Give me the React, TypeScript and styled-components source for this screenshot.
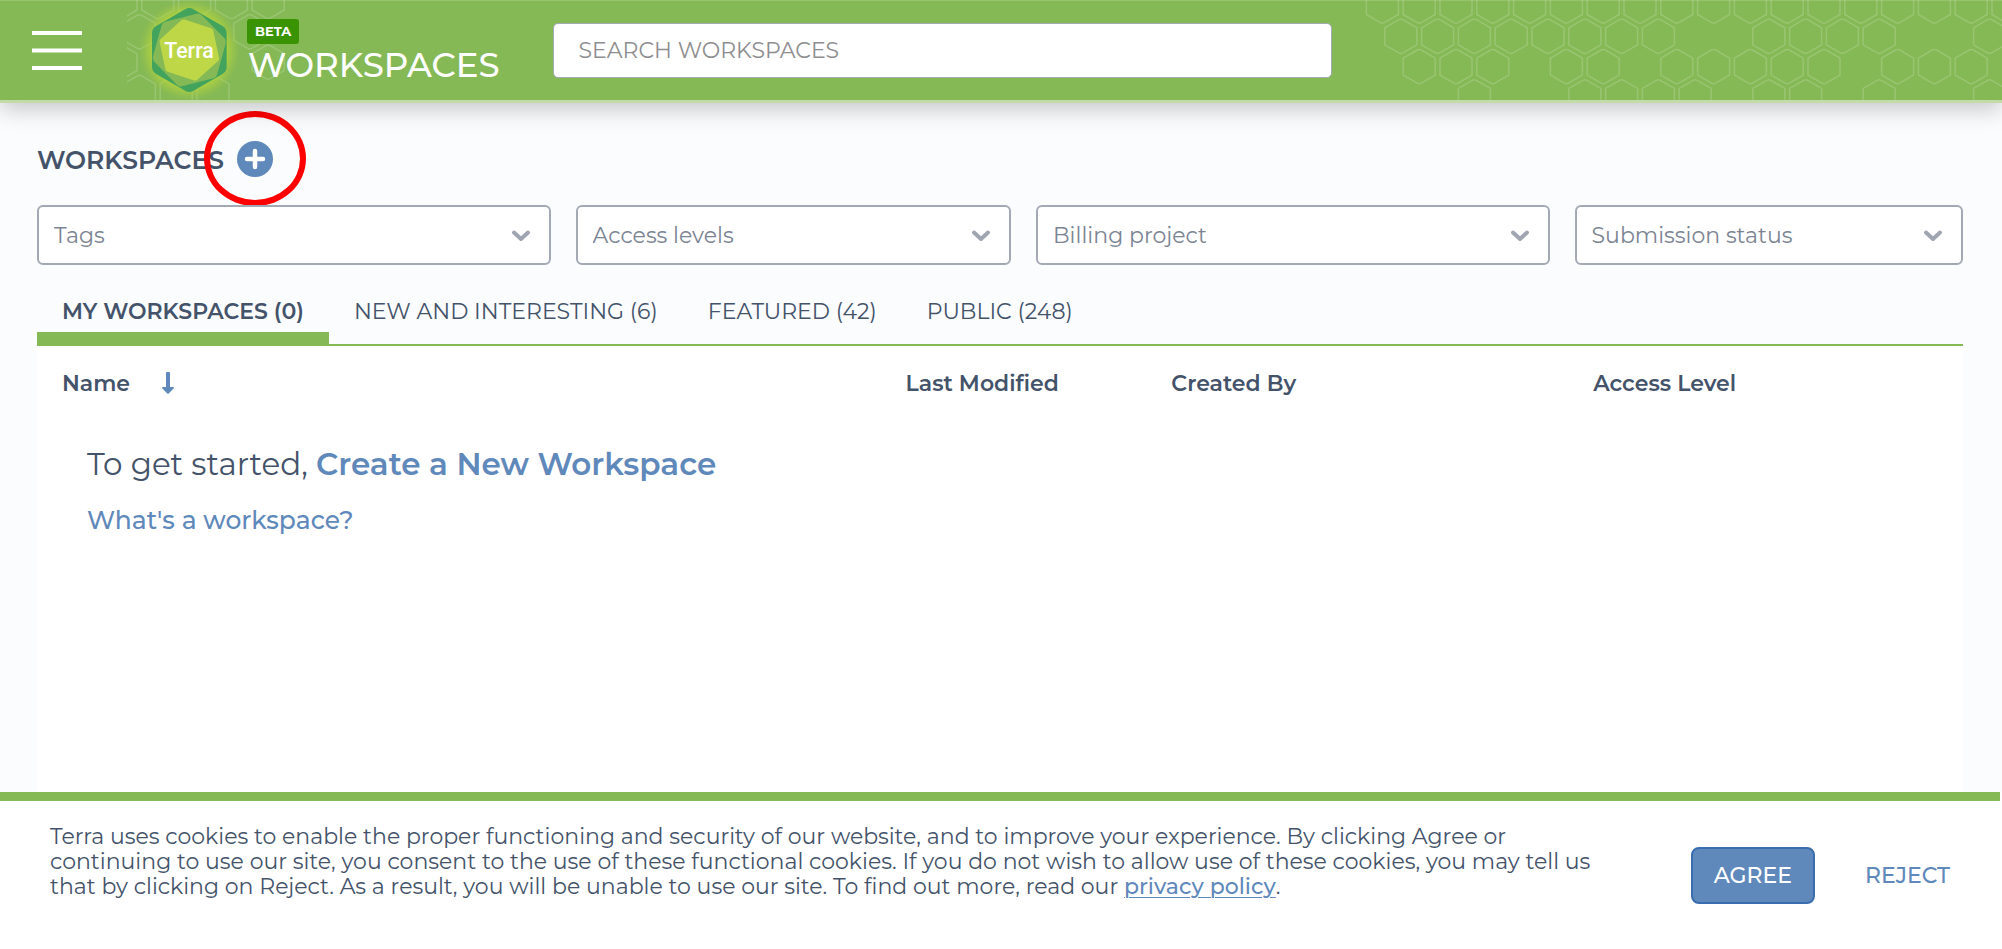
import React from 'react';
import styled, { createGlobalStyle } from 'styled-components';

const green = '#85b955';
const blue = '#5f88bb';
const ink = '#44536a';
const muted = '#7b8493';
const outline = '#a3a9b5';

const GlobalStyle = createGlobalStyle`
  *, *::before, *::after { box-sizing: border-box; }
  body { margin: 0; background: #fff; }
  body, button, input, select {
    font-family: Montserrat, Inter, 'Liberation Sans', sans-serif;
    font-size: 22px;
    line-height: 27px;
    color: ${ink};
  }
`;

const Page = styled.div`
  min-height: 100vh;
  display: flex;
  flex-direction: column;
`;

const Header = styled.header`
  position: relative;
  z-index: 1;
  display: flex;
  align-items: center;
  height: 103px;
  padding: 0 32px;
  background: ${green};
  border-bottom: 3px solid #c2dba9;
  box-shadow: 0 6px 22px rgba(0, 0, 0, 0.22), inset 0 1px 0 #98c470;
`;

const Honeycomb = styled.svg<{ $side: 'left' | 'right' }>`
  position: absolute;
  top: 0;
  ${(p) => (p.$side === 'left' ? 'left: 127px;' : 'right: 0;')}
  fill: none;
  stroke: #fff;
  stroke-opacity: 0.17;
  stroke-width: 1.5;
  pointer-events: none;
`;

const MenuButton = styled.button`
  display: flex;
  flex: none;
  padding: 0;
  border: 0;
  background: none;
  cursor: pointer;
`;

const LogoLink = styled.a`
  position: relative;
  display: flex;
  flex: none;
  margin-left: 38px;
`;

const Brand = styled.div`
  position: relative;
  display: flex;
  flex-direction: column;
  align-items: flex-start;
  gap: 3px;
  margin: 2px 0 0 7px;
`;

const Beta = styled.span`
  padding: 0 8px;
  border-radius: 3px;
  background: #3a9402;
  color: #fff;
  font-size: 13px;
  font-weight: 700;
  line-height: 25px;
`;

const Title = styled.div`
  padding-left: 1px;
  color: #fff;
  font-size: 34px;
  font-weight: 500;
  line-height: 36px;
`;

const Search = styled.input`
  position: relative;
  flex: 0 1 779px;
  min-width: 0;
  height: 55px;
  margin-left: 53px;
  padding: 0 25px;
  border: 1px solid ${outline};
  border-radius: 5px;
  background: #fff;
  &::placeholder { color: #8e8e90; opacity: 1; }
`;

const Main = styled.main`
  flex: 1;
  display: flex;
  flex-direction: column;
  padding: 38px 39px 0 37px;
  background: #fafcfe;
`;

const HeadingRow = styled.div`
  display: flex;
  align-items: center;
  gap: 13px;
`;

const Heading = styled.h1`
  margin: 0;
  padding-top: 2px;
  font-size: 25px;
  font-weight: 600;
  line-height: 30px;
`;

const AddWrap = styled.div`
  position: relative;
  display: flex;
`;

const AddButton = styled.button`
  display: flex;
  align-items: center;
  justify-content: center;
  width: 36px;
  height: 36px;
  padding: 0;
  border: 0;
  border-radius: 50%;
  background: ${blue};
  cursor: pointer;
`;

const Highlight = styled.span`
  position: absolute;
  top: -30px;
  left: -33px;
  width: 102px;
  height: 95px;
  border: 6px solid #fe0000;
  border-radius: 50%;
  pointer-events: none;
`;

const Filters = styled.div`
  display: grid;
  grid-template-columns: 513fr 435fr 513fr 388fr;
  gap: 25px;
  margin-top: 28px;
`;

const Field = styled.div`
  position: relative;
`;

const Select = styled.select`
  display: block;
  width: 100%;
  height: 60px;
  padding: 0 60px 0 15px;
  appearance: none;
  border: 2px solid ${outline};
  border-radius: 6px;
  background: #fff;
  color: ${muted};
`;

const Chevron = styled.svg`
  position: absolute;
  top: 25px;
  right: 20px;
  fill: none;
  stroke: #a0a6b1;
  stroke-width: 4;
  stroke-linecap: round;
  stroke-linejoin: round;
  pointer-events: none;
`;

const Tabs = styled.nav`
  display: flex;
  margin-top: 24px;
  box-shadow: inset 0 -2px 0 ${green};
`;

const Tab = styled.button<{ $active?: boolean }>`
  height: 57px;
  padding: 2px 25px 0;
  border: 0;
  border-bottom: 14px solid ${(p) => (p.$active ? green : 'transparent')};
  background: none;
  font-weight: ${(p) => (p.$active ? 600 : 400)};
  cursor: pointer;
`;

const Panel = styled.section`
  flex: 1;
  background: #fff;
`;

const Table = styled.table`
  width: 100%;
  table-layout: fixed;
  border-collapse: collapse;
`;

const Column = styled.col<{ $share: number }>`
  width: ${(p) => p.$share}%;
`;

const HeadCell = styled.th`
  height: 74px;
  padding: 0 0 0 25px;
  text-align: left;
  font-weight: 600;
`;

const SortButton = styled.button`
  display: flex;
  align-items: center;
  gap: 32px;
  padding: 0;
  border: 0;
  background: none;
  font-weight: 600;
  cursor: pointer;
`;

const EmptyCell = styled.td`
  padding: 25px 50px;
`;

const Intro = styled.p`
  margin: 0 0 22px;
  font-size: 31px;
  line-height: 38px;
`;

const TextLink = styled.a<{ $weight: number; $underline?: boolean }>`
  color: ${blue};
  font-weight: ${(p) => p.$weight};
  text-decoration: ${(p) => (p.$underline ? 'underline' : 'none')};
  text-decoration-thickness: 1px;
  text-underline-offset: 3px;
`;

const Help = styled.p`
  margin: 0;
  font-size: 25px;
  line-height: 30px;
`;

const CookieBar = styled.footer`
  display: flex;
  align-items: center;
  margin-right: 2px;
  padding: 0 50px;
  border-top: 9px solid ${green};
  background: #fff;
`;

const CookieText = styled.p`
  flex: 1;
  margin: 0 90px 0 0;
  padding: 23px 0 50px;
  line-height: 25px;
`;

const Agree = styled.button`
  height: 57px;
  padding: 0 21px;
  border: 2px solid #3a6daf;
  border-radius: 8px;
  background: ${blue};
  color: #fff;
  font-weight: 500;
  cursor: pointer;
`;

const Reject = styled.button`
  margin-left: 50px;
  padding: 0;
  border: 0;
  background: none;
  color: ${blue};
  font-weight: 500;
  cursor: pointer;
`;

/* Outline of one honeycomb cell with slightly softened tips. */
const cell = (cx: number, cy: number) =>
  `M${cx - 16} ${cy - 8.5}L${cx - 2} ${cy - 16.6}Q${cx} ${cy - 17.6} ${cx + 2} ${cy - 16.6}L${cx + 16} ${cy - 8.5}V${cy + 8.5}L${cx + 2} ${cy + 16.6}Q${cx} ${cy + 17.6} ${cx - 2} ${cy + 16.6}L${cx - 16} ${cy + 8.5}Z`;

const comb = (rows: number[][], x: number, y: number) =>
  rows
    .map((cols, r) => cols.map((c) => cell(x + c * 36.8 + (r % 2) * 18.4, y + r * 30.3)).join(''))
    .join('');

const rightRows = [
  [0, 1, 2, 3, 4, 5, 6, 7, 8, 9, 10, 11, 12, 13, 14, 15, 16, 17],
  [0, 1, 2, 3, 4, 5, 6, 7, 10, 11, 12, 13, 16],
  [1, 2, 3, 5, 6, 8, 9, 10, 11, 12, 14, 15, 16],
  [2, 5, 6, 7, 8, 10, 11, 13, 16],
];
const leftRows = [[0, 1, 2, 3, 4], [0, 3], [0, 4], [0, 1, 2]];

const hexPoints = (r: number, turn: number) =>
  [0, 60, 120, 180, 240, 300]
    .map((a) => {
      const t = ((a + turn) * Math.PI) / 180;
      return `${(208 + r * Math.sin(t)).toFixed(1)},${(150 - r * Math.cos(t)).toFixed(1)}`;
    })
    .join(' ');

const Hex = ({ r, turn, round, color }: { r: number; turn: number; round: number; color: string }) => (
  <polygon points={hexPoints(r, turn)} fill={color} stroke={color} strokeWidth={round} strokeLinejoin="round" />
);

const TerraLogo = () => (
  <svg width="120" height="100" viewBox="0 0 360 300" role="img" aria-label="Terra">
    <defs>
      <radialGradient id="glow" gradientUnits="userSpaceOnUse" cx="208" cy="150" r="152">
        <stop offset="0.7" stopColor="#b8d63c" stopOpacity="0.9" />
        <stop offset="0.84" stopColor="#b0d140" stopOpacity="0.5" />
        <stop offset="1" stopColor="#a0c84a" stopOpacity="0" />
      </radialGradient>
    </defs>
    <circle cx="208" cy="150" r="152" fill="url(#glow)" />
    <Hex r={100.5} turn={0} round={50} color="#42a35c" />
    <Hex r={98} turn={15.5} round={30} color="#84b956" />
    <Hex r={83.5} turn={-12} round={20} color="#bdd747" />
    <text x="207" y="173" textAnchor="middle" fill="#fff" fontFamily="Roboto, sans-serif" fontWeight="500" fontSize="64">
      Terra
    </text>
  </svg>
);

const filters = ['Tags', 'Access levels', 'Billing project', 'Submission status'];
const tabs = ['MY WORKSPACES (0)', 'NEW AND INTERESTING (6)', 'FEATURED (42)', 'PUBLIC (248)'];

export default function App() {
  return (
    <Page>
      <GlobalStyle />
      <Header>
        <Honeycomb $side="left" width="170" height="100" viewBox="127 0 170 100" aria-hidden="true">
          <path d={comb(leftRows, 121, 1.5)} />
        </Honeycomb>
        <Honeycomb $side="right" width="662" height="100" viewBox="0 0 662 100" aria-hidden="true">
          <path d={comb(rightRows, 42.4, 6)} />
        </Honeycomb>
        <MenuButton aria-label="Menu">
          <svg width="50" height="40" viewBox="0 0 50 40" stroke="#fff" strokeWidth="4" strokeLinecap="butt">
            <path d="M0 3H50M0 20.5H50M0 38H50" />
          </svg>
        </MenuButton>
        <LogoLink href="#">
          <TerraLogo />
        </LogoLink>
        <Brand>
          <Beta>BETA</Beta>
          <Title>WORKSPACES</Title>
        </Brand>
        <Search type="search" placeholder="SEARCH WORKSPACES" aria-label="Search workspaces" />
      </Header>

      <Main>
        <HeadingRow>
          <Heading>WORKSPACES</Heading>
          <AddWrap>
            <AddButton aria-label="Create a new workspace">
              <svg width="22" height="22" viewBox="0 0 22 22" stroke="#fff" strokeWidth="4.5" strokeLinecap="round">
                <path d="M3 11H19M11 3V19" />
              </svg>
            </AddButton>
            <Highlight />
          </AddWrap>
        </HeadingRow>

        <Filters>
          {filters.map((name) => (
            <Field key={name}>
              <Select aria-label={name}>
                <option>{name}</option>
              </Select>
              <Chevron width="20" height="12" viewBox="0 0 20 12" aria-hidden="true">
                <path d="M3 2.5L10 9L17 2.5" />
              </Chevron>
            </Field>
          ))}
        </Filters>

        <Tabs>
          {tabs.map((name, i) => (
            <Tab key={name} $active={i === 0}>
              {name}
            </Tab>
          ))}
        </Tabs>

        <Panel>
          <Table>
            <colgroup>
              <Column $share={43.8} />
              <Column $share={13.8} />
              <Column $share={21.9} />
              <Column $share={20.5} />
            </colgroup>
            <thead>
              <tr>
                <HeadCell>
                  <SortButton>
                    Name
                    <svg width="12" height="22" viewBox="0 0 12 22" fill={blue} aria-hidden="true">
                      <path d="M4 1a1 1 0 0 1 1-1h2a1 1 0 0 1 1 1v14h3.2a.8.8 0 0 1 .6 1.3L6.7 21.6a1 1 0 0 1-1.4 0L.2 16.3a.8.8 0 0 1 .6-1.3H4z" />
                    </svg>
                  </SortButton>
                </HeadCell>
                <HeadCell>Last Modified</HeadCell>
                <HeadCell>Created By</HeadCell>
                <HeadCell>Access Level</HeadCell>
              </tr>
            </thead>
            <tbody>
              <tr>
                <EmptyCell colSpan={4}>
                  <Intro>
                    To get started, <TextLink href="#" $weight={600}>Create a New Workspace</TextLink>
                  </Intro>
                  <Help>
                    <TextLink href="#" $weight={500}>What's a workspace?</TextLink>
                  </Help>
                </EmptyCell>
              </tr>
            </tbody>
          </Table>
        </Panel>
      </Main>

      <CookieBar>
        <CookieText>
          Terra uses cookies to enable the proper functioning and security of our website, and to improve your
          experience. By clicking Agree or continuing to use our site, you consent to the use of these functional
          cookies. If you do not wish to allow use of these cookies, you may tell us that by clicking on Reject. As a
          result, you will be unable to use our site. To find out more, read our{' '}
          <TextLink href="#" $weight={500} $underline>privacy policy</TextLink>.
        </CookieText>
        <Agree>AGREE</Agree>
        <Reject>REJECT</Reject>
      </CookieBar>
    </Page>
  );
}
